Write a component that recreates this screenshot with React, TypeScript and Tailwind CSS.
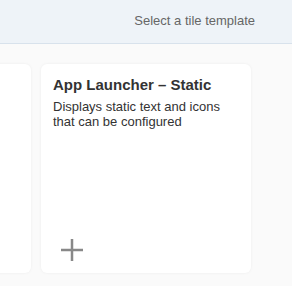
import React from "react";

function Card({ title, desc }: { title: string; desc: string }) {
  return (
    <div className="w-[210px] h-[209px] shrink-0 bg-white rounded-[6px] shadow-[0_0_3px_rgba(0,0,0,0.06)] px-3 pt-[12px] pb-3 flex flex-col">
      <div className="text-[15px] leading-[18px] font-bold text-[#333333]">{title}</div>
      <div className="mt-[5px] text-[13px] leading-[15px] text-[#333333]">{desc}</div>
      <div className="mt-auto pl-[8px]">
        <svg width="22" height="22" viewBox="0 0 22 22">
          <path d="M11 0V22M0 11H22" stroke="#888888" strokeWidth="2.5" />
        </svg>
      </div>
    </div>
  );
}

export default function App() {
  return (
    <div className="w-[292px] h-[286px] overflow-hidden bg-[#fafafa]" style={{ fontFamily: '"Liberation Sans", Arial, sans-serif' }}>
      <div className="h-[44px] bg-[#eef3f8] border-b border-[#d8e2ec] flex items-center justify-end pr-[37px]">
        <span className="text-[13px] text-[#666666] pb-[1px]">Select a tile template</span>
      </div>
      <div className="pt-[20px] flex gap-[10px] ml-[-179px]">
        <Card title="" desc="" />
        <Card title="App Launcher – Static" desc="Displays static text and icons that can be configured" />
      </div>
    </div>
  );
}
